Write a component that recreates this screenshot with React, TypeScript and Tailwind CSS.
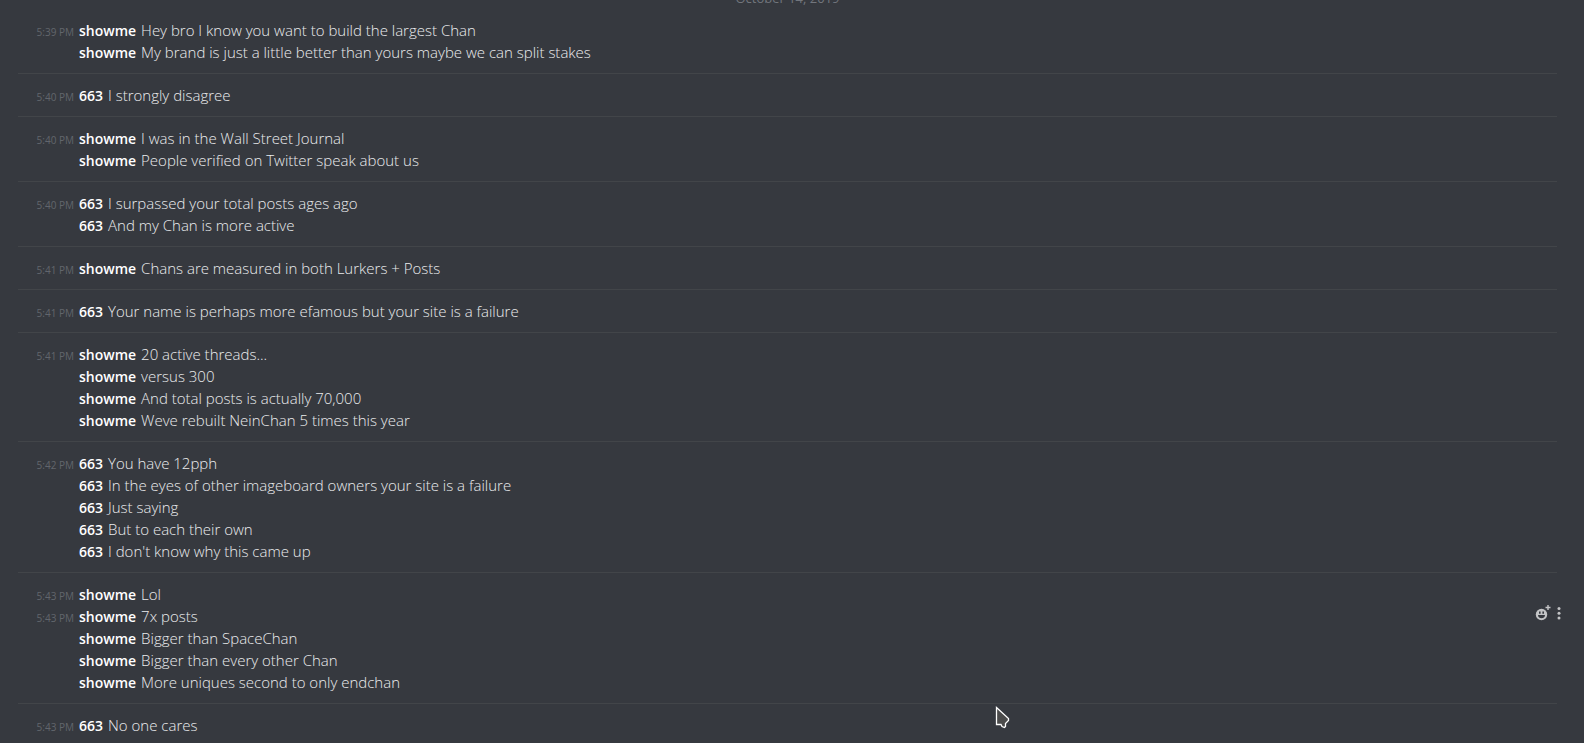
import React from 'react';

interface Message {
  text: string;
  time?: string;
  hovered?: boolean;
}

interface MessageGroup {
  author: string;
  messages: Message[];
}

const GROUPS: MessageGroup[] = [
  {
    author: 'showme',
    messages: [
      { time: '5:39 PM', text: 'Hey bro I know you want to build the largest Chan' },
      { text: 'My brand is just a little better than yours maybe we can split stakes' },
    ],
  },
  { author: '663', messages: [{ time: '5:40 PM', text: 'I strongly disagree' }] },
  {
    author: 'showme',
    messages: [
      { time: '5:40 PM', text: 'I was in the Wall Street Journal' },
      { text: 'People verified on Twitter speak about us' },
    ],
  },
  {
    author: '663',
    messages: [
      { time: '5:40 PM', text: 'I surpassed your total posts ages ago' },
      { text: 'And my Chan is more active' },
    ],
  },
  { author: 'showme', messages: [{ time: '5:41 PM', text: 'Chans are measured in both Lurkers + Posts' }] },
  {
    author: '663',
    messages: [{ time: '5:41 PM', text: 'Your name is perhaps more efamous but your site is a failure' }],
  },
  {
    author: 'showme',
    messages: [
      { time: '5:41 PM', text: '20 active threads...' },
      { text: 'versus 300' },
      { text: 'And total posts is actually 70,000' },
      { text: 'Weve rebuilt NeinChan 5 times this year' },
    ],
  },
  {
    author: '663',
    messages: [
      { time: '5:42 PM', text: 'You have 12pph' },
      { text: 'In the eyes of other imageboard owners your site is a failure' },
      { text: 'Just saying' },
      { text: 'But to each their own' },
      { text: "I don't know why this came up" },
    ],
  },
  {
    author: 'showme',
    messages: [
      { time: '5:43 PM', text: 'Lol' },
      { time: '5:43 PM', text: '7x posts', hovered: true },
      { text: 'Bigger than SpaceChan' },
      { text: 'Bigger than every other Chan' },
      { text: 'More uniques second to only endchan' },
    ],
  },
  { author: '663', messages: [{ time: '5:43 PM', text: 'No one cares' }] },
];

const MessageActions: React.FC = () => (
  <div className="absolute -right-1.5 top-0 flex items-center gap-1 text-[#c3c4c6]">
    <button type="button" aria-label="Add Reaction">
      <svg width="16" height="16" viewBox="0 0 16 16" fill="none">
        <circle cx="6.5" cy="9.5" r="5.7" fill="currentColor" />
        <path d="M4 6.5h1.6v2.2H4zM7.4 6.5H9v2.2H7.4zM3 10h7c0 4.4-7 4.4-7 0z" fill="#36393f" />
        <path d="M13 0v5M10.5 2.5h5" stroke="currentColor" strokeWidth="1.4" />
      </svg>
    </button>
    <button type="button" aria-label="More">
      <svg width="8" height="16" viewBox="0 0 8 16" fill="currentColor">
        <circle cx="4" cy="3.5" r="1.5" />
        <circle cx="4" cy="8.2" r="1.5" />
        <circle cx="4" cy="13" r="1.5" />
      </svg>
    </button>
  </div>
);

const MessageRow: React.FC<{ author: string; message: Message }> = ({ author, message }) => (
  <div className="relative flex items-baseline text-[15px] leading-[22px] text-[#ebecee]">
    <time className="w-14 shrink-0 text-right text-[10px] leading-4 text-[#62666c]">{message.time}</time>
    <span className="ml-[5px] text-sm leading-5 font-semibold text-white">{author}</span>
    <p className="ml-[5px] min-w-0 flex-1 font-light">{message.text}</p>
    {message.hovered && <MessageActions />}
  </div>
);

// Pointer resting on the message list
const Cursor: React.FC = () => (
  <svg className="pointer-events-none absolute left-[995px] top-[706px]" width="16" height="24" viewBox="0 0 16 24">
    <path
      d="M1.5 1.5V18.5H6L7 20.5L9.5 21.5L10.5 20.5V17.5L13.5 14.5V12.5Z"
      fill="#4b4b4b"
      stroke="#fff"
      strokeWidth="1.3"
    />
  </svg>
);

export default function App() {
  return (
    <main className="relative h-screen overflow-hidden bg-[#36393f] pl-[18px] pr-[27px] font-['Open_Sans',sans-serif]">
      <div className="flex h-[9px] items-end justify-center text-[13px] leading-[18px] text-[#72767d]">
        <span className="pb-0.5">October 14, 2019</span>
      </div>
      {GROUPS.map((group, i) => (
        <section key={i} className="border-b border-[#424549] py-2.5 last-of-type:border-b-0">
          {group.messages.map((message, j) => (
            <MessageRow key={j} author={group.author} message={message} />
          ))}
        </section>
      ))}
      <Cursor />
    </main>
  );
}
